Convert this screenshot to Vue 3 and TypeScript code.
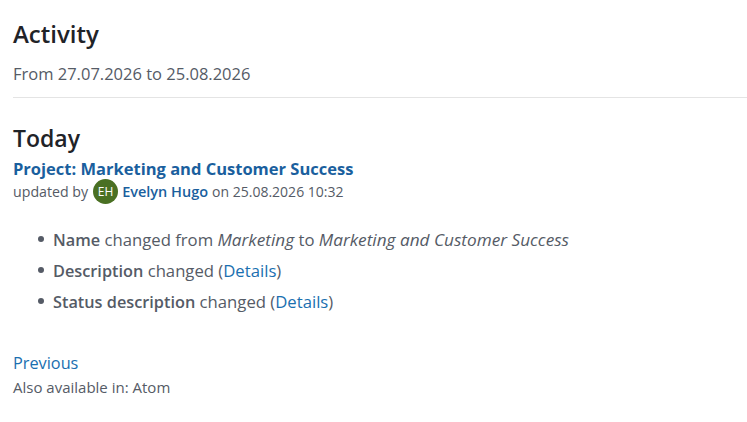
<script setup lang="ts">
interface Change { label: string; rest: string; link?: string }
const changes: Change[] = [
  { label: 'Description', rest: 'changed', link: 'Details' },
  { label: 'Status description', rest: 'changed', link: 'Details' },
]
</script>

<template>
  <main class="page">
    <h2 class="title">Activity</h2>
    <p class="range">From 27.07.2026 to 25.08.2026</p>
    <hr class="rule" />
    <h3 class="day">Today</h3>
    <a class="event" href="#">Project: Marketing and Customer Success</a>
    <div class="meta">
      <span>updated by</span>
      <span class="avatar">EH</span>
      <a class="author" href="#">Evelyn Hugo</a>
      <span class="when">on 25.08.2026 10:32</span>
    </div>
    <ul class="changes">
      <li><strong>Name</strong> changed from <em>Marketing</em> to <em>Marketing and Customer Success</em></li>
      <li v-for="c in changes" :key="c.label">
        <strong>{{ c.label }}</strong> {{ c.rest }} (<a href="#">{{ c.link }}</a>)
      </li>
    </ul>
    <a class="prev" href="#">Previous</a>
    <p class="also">Also available in: <span>Atom</span></p>
  </main>
</template>

<style scoped>
.page {
  padding: 18px 0 0 13px;
  font-family: "Open Sans", "Noto Sans", sans-serif;
  color: #555b66;
  font-size: 15px;
}
.title {
  margin: 0;
  font-size: 24px;
  line-height: 32px;
  font-weight: 600;
  color: #1f2328;
}
.range {
  margin: 13px 0 0;
  font-size: 16.5px;
  line-height: 22px;
}
.rule {
  margin: 12px 0 0;
  border: 0;
  border-top: 1px solid #e4e4e4;
}
.day {
  margin: 24px 0 0;
  font-size: 23px;
  line-height: 32px;
  font-weight: 600;
  color: #1f2328;
}
.event {
  display: block;
  margin-top: 4px;
  font-size: 16.5px;
  line-height: 22px;
  font-weight: 700;
  color: #1a5f9e;
  text-decoration: none;
}
.meta {
  display: flex;
  align-items: center;
  gap: 4px;
  margin-top: -1px;
  font-size: 14.2px;
  line-height: 25px;
}
.avatar {
  width: 25px;
  height: 25px;
  border-radius: 50%;
  background: #4a7023;
  color: #fff;
  font-size: 12px;
  display: flex;
  align-items: center;
  justify-content: center;
  margin-left: 1px;
}
.author {
  font-size: 14.5px;
  font-weight: 600;
  color: #1a5f9e;
  text-decoration: none;
}
.when {
  font-size: 14px;
}
.changes {
  margin: 20px 0 0;
  padding: 0 0 0 40px;
  list-style: none;
  font-size: 16.7px;
  line-height: 31px;
}
.changes li {
  position: relative;
  height: 31px;
}
.changes li::before {
  content: "";
  position: absolute;
  left: -15px;
  top: 12px;
  width: 6px;
  height: 6px;
  border-radius: 50%;
  background: #555b66;
}
.changes strong {
  font-size: 16.3px;
  font-weight: 600;
  line-height: 1;
}
.changes em {
  font-size: 17.2px;
  line-height: 1;
}
.changes a {
  color: #1a6fb0;
  text-decoration: none;
}
.prev {
  display: block;
  margin-top: 35px;
  font-size: 16.3px;
  line-height: 22px;
  color: #1a6fb0;
  text-decoration: none;
}
.also {
  margin: 3px 0 0;
  font-size: 15px;
  line-height: 20px;
}
</style>
